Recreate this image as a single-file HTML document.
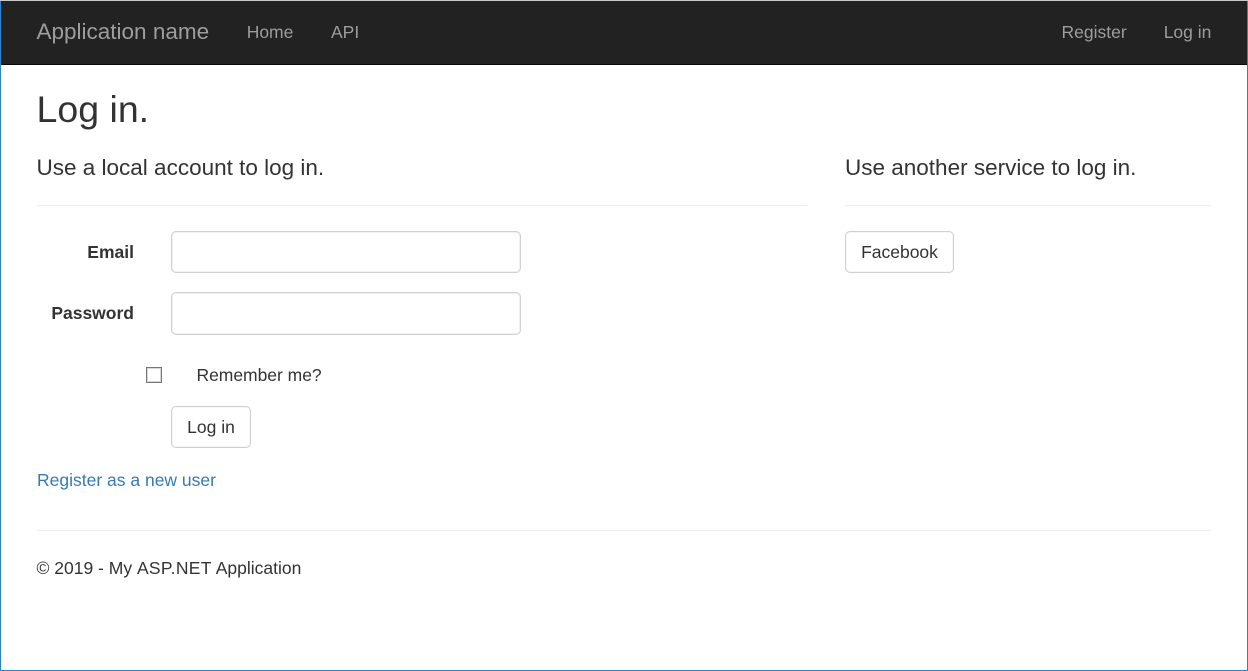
<!DOCTYPE html>
<html lang="en">
<head>
<meta charset="utf-8">
<title>Log in</title>
<style>
html,body{margin:0;padding:0;background:#fff}
body{width:1248px;height:671px;position:relative;overflow:hidden;font-family:"Liberation Sans",Arial,sans-serif;font-size:17.5px;color:#333}
.a{position:absolute;white-space:nowrap}
.nav{position:absolute;left:0;top:1px;width:1248px;height:63px;background:#222;border-bottom:1px solid #080808}
.n{color:#9d9d9d;line-height:24px}
.hr{position:absolute;height:1px;background:#eee}
.in{position:absolute;box-sizing:border-box;background:#fff;border:1px solid #d0d0d0;border-radius:5px;box-shadow:inset 0 0 0 1px #f1f1f1,inset 0 1px 1px rgba(0,0,0,.04)}
.btn{position:absolute;box-sizing:border-box;background:#fff;border:1px solid #d0d0d0;border-radius:5px;color:#333;text-align:center;line-height:40px;box-shadow:inset 0 0 0 1px #f7f7f7}
.edge{position:absolute;background:#1e88e0}
</style>
</head>
<body>
<div class="nav"></div>
<div class="a n" style="left:36.5px;top:19px;font-size:22.5px;line-height:26px">Application name</div>
<div class="a n" style="left:246.7px;top:20px">Home</div>
<div class="a n" style="left:331px;top:20px">API</div>
<div class="a n" style="left:1061.5px;top:20px">Register</div>
<div class="a n" style="left:1163.7px;top:20px">Log in</div>

<div class="a" style="left:36.5px;top:87px;font-size:37.5px;line-height:44px">Log in.</div>
<div class="a" style="left:36.5px;top:155px;font-size:22.5px;line-height:25px">Use a local account to log in.</div>
<div class="a" style="left:845px;top:155px;font-size:22.5px;line-height:25px">Use another service to log in.</div>
<div class="hr" style="left:37px;top:205px;width:770px"></div>
<div class="hr" style="left:845px;top:205px;width:366px"></div>

<div class="a" style="right:1114px;top:240px;font-weight:bold;line-height:24px">Email</div>
<div class="in" style="left:171px;top:231px;width:350px;height:42px"></div>
<div class="a" style="right:1114px;top:301px;font-weight:bold;line-height:24px">Password</div>
<div class="in" style="left:171px;top:292px;width:350px;height:43px"></div>

<div class="a" style="left:146px;top:367px;width:16px;height:16px;box-sizing:border-box;border:1px solid #767676;background:#fff;box-shadow:inset 0 0 0 1px #d8d8d8"></div>
<div class="a" style="left:196.5px;top:363px;line-height:24px;letter-spacing:-.03px">Remember me?</div>
<div class="btn" style="left:171px;top:406px;width:80px;height:42px">Log in</div>
<div class="btn" style="left:845px;top:231px;width:109px;height:42px">Facebook</div>

<div class="a" style="left:37px;top:468px;line-height:24px;color:#337ab7">Register as a new user</div>
<div class="hr" style="left:37px;top:530px;width:1174px"></div>
<div class="a" style="left:36.5px;top:556px;line-height:24px">© 2019 - My <span style="letter-spacing:.32px">ASP.NET</span> Application</div>

<div class="edge" style="left:0;top:0;width:1px;height:671px"></div>
<div class="edge" style="right:0;top:0;width:1px;height:671px"></div>
<div class="edge" style="left:0;bottom:0;width:1248px;height:1px"></div>
<div class="a" style="left:0;top:0;width:1248px;height:1px;background:#c8c8c8"></div>
</body>
</html>
